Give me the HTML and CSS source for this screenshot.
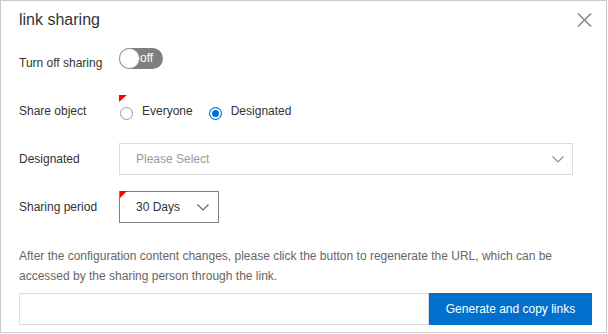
FILE: index.html
```html
<!DOCTYPE html>
<html>
<head>
<meta charset="utf-8">
<title>link sharing</title>
<link rel="stylesheet" href="styles.css">
</head>
<body>
<div class="dialog">
  <div class="header">
    <h1 class="title">link sharing</h1>
    <button class="close" aria-label="Close">
      <svg width="15" height="14" viewBox="0 0 15 14"><path d="M1 0.5L14 13.5M14 0.5L1 13.5" stroke="#8a8a8a" stroke-width="1.6" fill="none"/></svg>
    </button>
  </div>

  <div class="row row-toggle">
    <span class="label label-toggle">Turn off sharing</span>
    <span class="switch"><span class="knob"></span><span class="switch-text">off</span></span>
  </div>

  <div class="row row-radio">
    <span class="label">Share object</span>
    <div class="radios">
      <span class="flag"></span>
      <span class="radio"><span class="circle"></span>Everyone</span>
      <span class="radio"><span class="circle checked"></span>Designated</span>
    </div>
  </div>

  <div class="row row-select">
    <span class="label">Designated</span>
    <div class="select select-wide">
      <span class="placeholder">Please Select</span>
      <svg class="chev" width="12" height="7" viewBox="0 0 12 7"><path d="M0.5 0.5L6 6L11.5 0.5" stroke="#8c8c8c" stroke-width="1.1" fill="none"/></svg>
    </div>
  </div>

  <div class="row row-period">
    <span class="label">Sharing period</span>
    <div class="select select-small">
      <span class="flag flag-small"></span>
      <span class="value">30 Days</span>
      <svg class="chev" width="12" height="7" viewBox="0 0 12 7"><path d="M0.5 0.5L6 6L11.5 0.5" stroke="#666" stroke-width="1.2" fill="none"/></svg>
    </div>
  </div>

  <p class="note">After the configuration content changes, please click the button to regenerate the URL, which can be accessed by the sharing person through the link.</p>

  <div class="link-row">
    <div class="link-input"></div>
    <button class="btn-primary">Generate and copy links</button>
  </div>
</div>
</body>
</html>
```

FILE: styles.css
```css
html, body {
  margin: 0;
  padding: 0;
  background: #fff;
}

body {
  font-family: "Liberation Sans", Arial, sans-serif;
  font-size: 12px;
  color: #333;
}

.dialog {
  width: 607px;
  height: 333px;
  box-sizing: border-box;
  border: 1px solid #c9c9c9;
  padding: 0 14px 0 18px;
  background: #fff;
  display: flex;
  flex-direction: column;
}

.header {
  height: 37px;
  display: flex;
  justify-content: space-between;
  align-items: flex-start;
}

.title {
  margin: 10px 0 0 0;
  font-size: 16px;
  line-height: 18px;
  font-weight: normal;
  color: #333;
}

.close {
  margin-top: 12px;
  padding: 0;
  border: 0;
  background: none;
  width: 15px;
  height: 14px;
  display: block;
}

.close svg {
  display: block;
}

.row {
  display: flex;
  align-items: center;
}

.label {
  width: 100px;
  flex: none;
  line-height: 16px;
  color: #333;
}

.row-toggle {
  height: 41px;
}

.label-toggle {
  padding-top: 8px;
}

.switch {
  width: 44px;
  height: 21px;
  border-radius: 11px;
  background: #7f7f7f;
  display: flex;
  align-items: center;
}

.knob {
  width: 21px;
  height: 21px;
  box-sizing: border-box;
  border-radius: 50%;
  background: #fff;
  border: 1px solid #9a9a9a;
  flex: none;
}

.switch-text {
  color: #fff;
  margin-left: 0;
  line-height: 21px;
  font-size: 12px;
}

.row-radio {
  height: 64px;
}

.radios {
  position: relative;
  display: flex;
  align-items: center;
  gap: 15px;
}

.flag {
  position: absolute;
  top: -8px;
  left: 0;
  width: 0;
  height: 0;
  border-top: 7px solid #f00;
  border-right: 8px solid transparent;
}

.radio {
  display: flex;
  align-items: center;
  line-height: 16px;
  color: #333;
}

.circle {
  width: 13px;
  height: 13px;
  box-sizing: border-box;
  border-radius: 50%;
  border: 1px solid #999;
  background: #fff;
  margin: 4px 9px 0 1px;
  flex: none;
}

.circle.checked {
  border-color: #0070cc;
  background: #0070cc;
  box-shadow: inset 0 0 0 2px #fff;
}

.row-select {
  height: 32px;
}

.select {
  height: 32px;
  box-sizing: border-box;
  display: flex;
  align-items: center;
  justify-content: space-between;
  padding: 0 8px 0 16px;
  background: #fff;
}

.select-wide {
  width: 454px;
  border: 1px solid #dcdcdc;
}

.placeholder {
  color: #999;
}

.chev {
  display: block;
}

.row-period {
  margin-top: 16px;
  height: 32px;
}

.select-small {
  position: relative;
  width: 100px;
  border: 1px solid #7f7f7f;
  padding-right: 9px;
}

.flag-small {
  top: -1px;
  left: 0;
  border-top: 7px solid #f00;
  border-right: 7px solid transparent;
}

.value {
  color: #333;
}

.note {
  margin: 23px 0 0 0;
  line-height: 20px;
  color: #666;
}

.link-row {
  margin-top: 7px;
  display: flex;
  height: 32px;
}

.link-input {
  width: 410px;
  box-sizing: border-box;
  border: 1px solid #dcdcdc;
}

.btn-primary {
  width: 163px;
  border: 0;
  margin: 0;
  background: #0070cc;
  color: #fff;
  font-family: "Liberation Sans", Arial, sans-serif;
  font-size: 12px;
  padding: 0;
}
```
